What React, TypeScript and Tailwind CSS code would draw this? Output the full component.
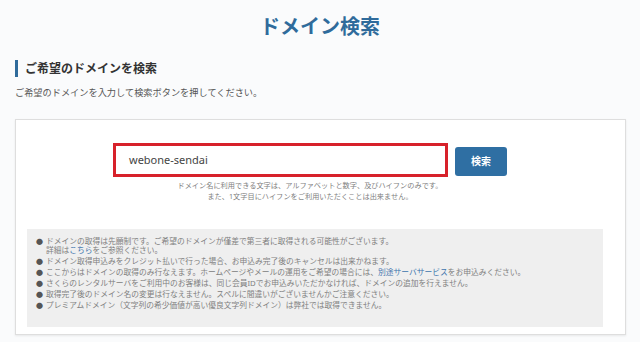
import React from "react";

const notes: { text: React.ReactNode; sub?: React.ReactNode }[] = [
  {
    text: "ドメインの取得は先願制です。ご希望のドメインが僅差で第三者に取得される可能性がございます。",
    sub: (
      <>
        詳細は<span className="text-[#3d74ad]">こちら</span>をご参照ください。
      </>
    ),
  },
  { text: "ドメイン取得申込みをクレジット払いで行った場合、お申込み完了後のキャンセルは出来かねます。" },
  {
    text: (
      <>
        ここからはドメインの取得のみ行なえます。ホームページやメールの運用をご希望の場合には、
        <span className="text-[#3d74ad]">別途サーバサービス</span>をお申込みください。
      </>
    ),
  },
  { text: "さくらのレンタルサーバをご利用中のお客様は、同じ会員IDでお申込みいただかなければ、ドメインの追加を行えません。" },
  { text: "取得完了後のドメイン名の変更は行なえません。スペルに間違いがございませんかご注意ください。" },
  { text: "プレミアムドメイン（文字列の希少価値が高い優良文字列ドメイン）は弊社では取得できません。" },
];

const DomainSearch = () => {
  return (
    <div
      className="w-[640px] h-[342px] overflow-hidden bg-[#fafbfc] px-[15px] text-[#555]"
      style={{ fontFamily: '"Noto Sans", "Noto Sans CJK JP", sans-serif' }}
    >
      {/* TITLE */}
      <h1 className="pt-[12px] h-[44px] text-center text-[20px] leading-[30px] font-bold text-[#2f6b9b]">
        ドメイン検索
      </h1>

      {/* SECTION HEADING */}
      <h2 className="mt-[16px] border-l-[3px] border-[#2f6b9b] pl-[7px] h-[17px] text-[12px] leading-[17px] font-bold text-[#333]">
        ご希望のドメインを検索
      </h2>
      <p className="mt-[9px] text-[9.2px] leading-[14px] text-[#555]">
        ご希望のドメインを入力して検索ボタンを押してください。
      </p>

      {/* SEARCH CARD */}
      <div className="mt-[19px] w-[611px] h-[216px] bg-white border border-[#dedede] shadow-[0_1px_2px_rgba(0,0,0,0.08)] pt-[23px]">
        <div className="ml-[97px] w-[394px]">
          <div className="flex items-start gap-[7px]">
            <div className="w-[335px] h-[34px] border-[3px] border-[#d7212a] bg-white flex items-center pl-[13px] text-[11px] text-[#444]">
              webone-sendai
            </div>
            <button className="mt-[4px] w-[52px] h-[29px] rounded-[3px] bg-[#2f6fa3] text-white text-[10px] font-bold">
              検索
            </button>
          </div>
          <div className="mt-[3px] text-center text-[7.2px] leading-[11px] text-[#808080]">
            <p>ドメイン名に利用できる文字は、アルファベットと数字、及びハイフンのみです。</p>
            <p>また、1文字目にハイフンをご利用いただくことは出来ません。</p>
          </div>
        </div>

        {/* NOTES */}
        <div className="mt-[27px] ml-[11px] w-[576px] h-[98px] bg-[#efefef] pt-[8px] pl-[9px]">
          <ul className="text-[7.75px] leading-[9px] text-[#808080]">
            {notes.map((n, i) => (
              <li key={i} className="flex mb-[2px]">
                <span className="w-[10px] shrink-0 text-[#555] text-[7px]">●</span>
                <div>
                  <div>{n.text}</div>
                  {n.sub && <div>{n.sub}</div>}
                </div>
              </li>
            ))}
          </ul>
        </div>
      </div>
    </div>
  );
};

export default function App() {
  return <DomainSearch />;
}
